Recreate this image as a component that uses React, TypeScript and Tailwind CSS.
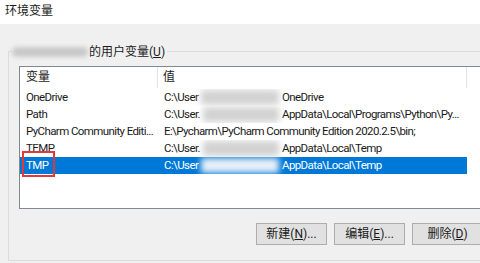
const font = "font-['Roboto','Noto_Sans_CJK_SC',sans-serif]";

type Row = { name: string; pre: string; post: string; selected?: boolean };

const rows: Row[] = [
  { name: 'OneDrive', pre: 'C:\\User', post: 'OneDrive' },
  { name: 'Path', pre: 'C:\\User.', post: 'AppData\\Local\\Programs\\Python\\Py...' },
  { name: 'PyCharm Community Editi...', pre: 'E:\\Pycharm\\PyCharm Community Edition 2020.2.5\\bin;', post: '' },
  { name: 'TEMP', pre: 'C:\\User.', post: 'AppData\\Local\\Temp' },
  { name: 'TMP', pre: 'C:\\User', post: 'AppData\\Local\\Temp', selected: true },
];

function ListRow({ row }: { row: Row }) {
  const sel = row.selected;
  return (
    <div
      className={`flex h-[17px] leading-[17px] w-[447px] text-[11.5px] tracking-[-0.6px] ${
        sel ? 'bg-[#0078d7] text-white' : 'text-[#1a1a1a]'
      }`}
    >
      <div className="w-[138px] pl-[6px] whitespace-nowrap overflow-hidden">{row.name}</div>
      <div className="flex-1 pl-[6px] whitespace-nowrap overflow-hidden flex">
        {row.post ? (
          <>
            <span className="w-[118px] shrink-0 flex">
              <span>{row.pre}</span>
              <span className="relative flex-1 h-[17px]">
                <span
                  className={`absolute inset-x-[3px] inset-y-[1px] blur-[3px] ${
                    sel ? 'bg-[#e8f0f8]' : 'bg-[#d2d2d2]'
                  }`}
                />
              </span>
            </span>
            <span>{row.post}</span>
          </>
        ) : (
          <span>{row.pre}</span>
        )}
      </div>
    </div>
  );
}

function Button({ label }: { label: React.ReactNode }) {
  return (
    <div className="w-[71px] h-[22px] shrink-0 border border-[#adadad] bg-[#e1e1e1] flex items-center justify-center text-[12px] text-[#1a1a1a]">
      {label}
    </div>
  );
}

export default function App() {
  return (
    <div className={`w-[480px] h-[263px] overflow-hidden bg-[#f0f0f0] text-[12px] ${font}`}>
      <div className="h-[24px] bg-white pl-[5px] pt-[2px] text-[12px] text-[#1a1a1a]">环境变量</div>

      <div className="relative ml-[8px] mt-[27px] w-[500px] h-[210px] border border-[#dcdcdc] pl-[10px] pt-[14px]">
        <div className="absolute left-[3px] -top-[9px] flex items-center h-[17px] bg-[#f0f0f0] pr-[2px]">
          <span className="w-[76px] h-[10px] mr-[1px] bg-[#c9c9c9] blur-[2px] rounded-full" />
          <span className="text-[#1a1a1a]">
            的用户变量(<span className="underline">U</span>)
          </span>
        </div>

        <div className="relative w-[470px] h-[143px] border border-[#828790] bg-white">
          <div className="flex h-[21px] leading-[21px] text-[#1a1a1a]">
            <div className="w-[138px] pl-[6px] border-r border-[#e5e5e5]">变量</div>
            <div className="w-[309px] pl-[5px] border-r border-[#e5e5e5]">值</div>
          </div>
          <div className="pt-[1px]">
            {rows.map((r) => (
              <ListRow key={r.name} row={r} />
            ))}
          </div>
          <div className="absolute left-[2px] top-[84px] w-[33px] h-[26px] border-2 border-[#e0393c]" />
        </div>

        <div className="flex gap-[7px] mt-[14px] ml-[237px]">
          <Button label={<>新建(<span className="underline">N</span>)...</>} />
          <Button label={<>编辑(<span className="underline">E</span>)...</>} />
          <Button label={<>删除(<span className="underline">D</span>)</>} />
        </div>
      </div>
    </div>
  );
}
